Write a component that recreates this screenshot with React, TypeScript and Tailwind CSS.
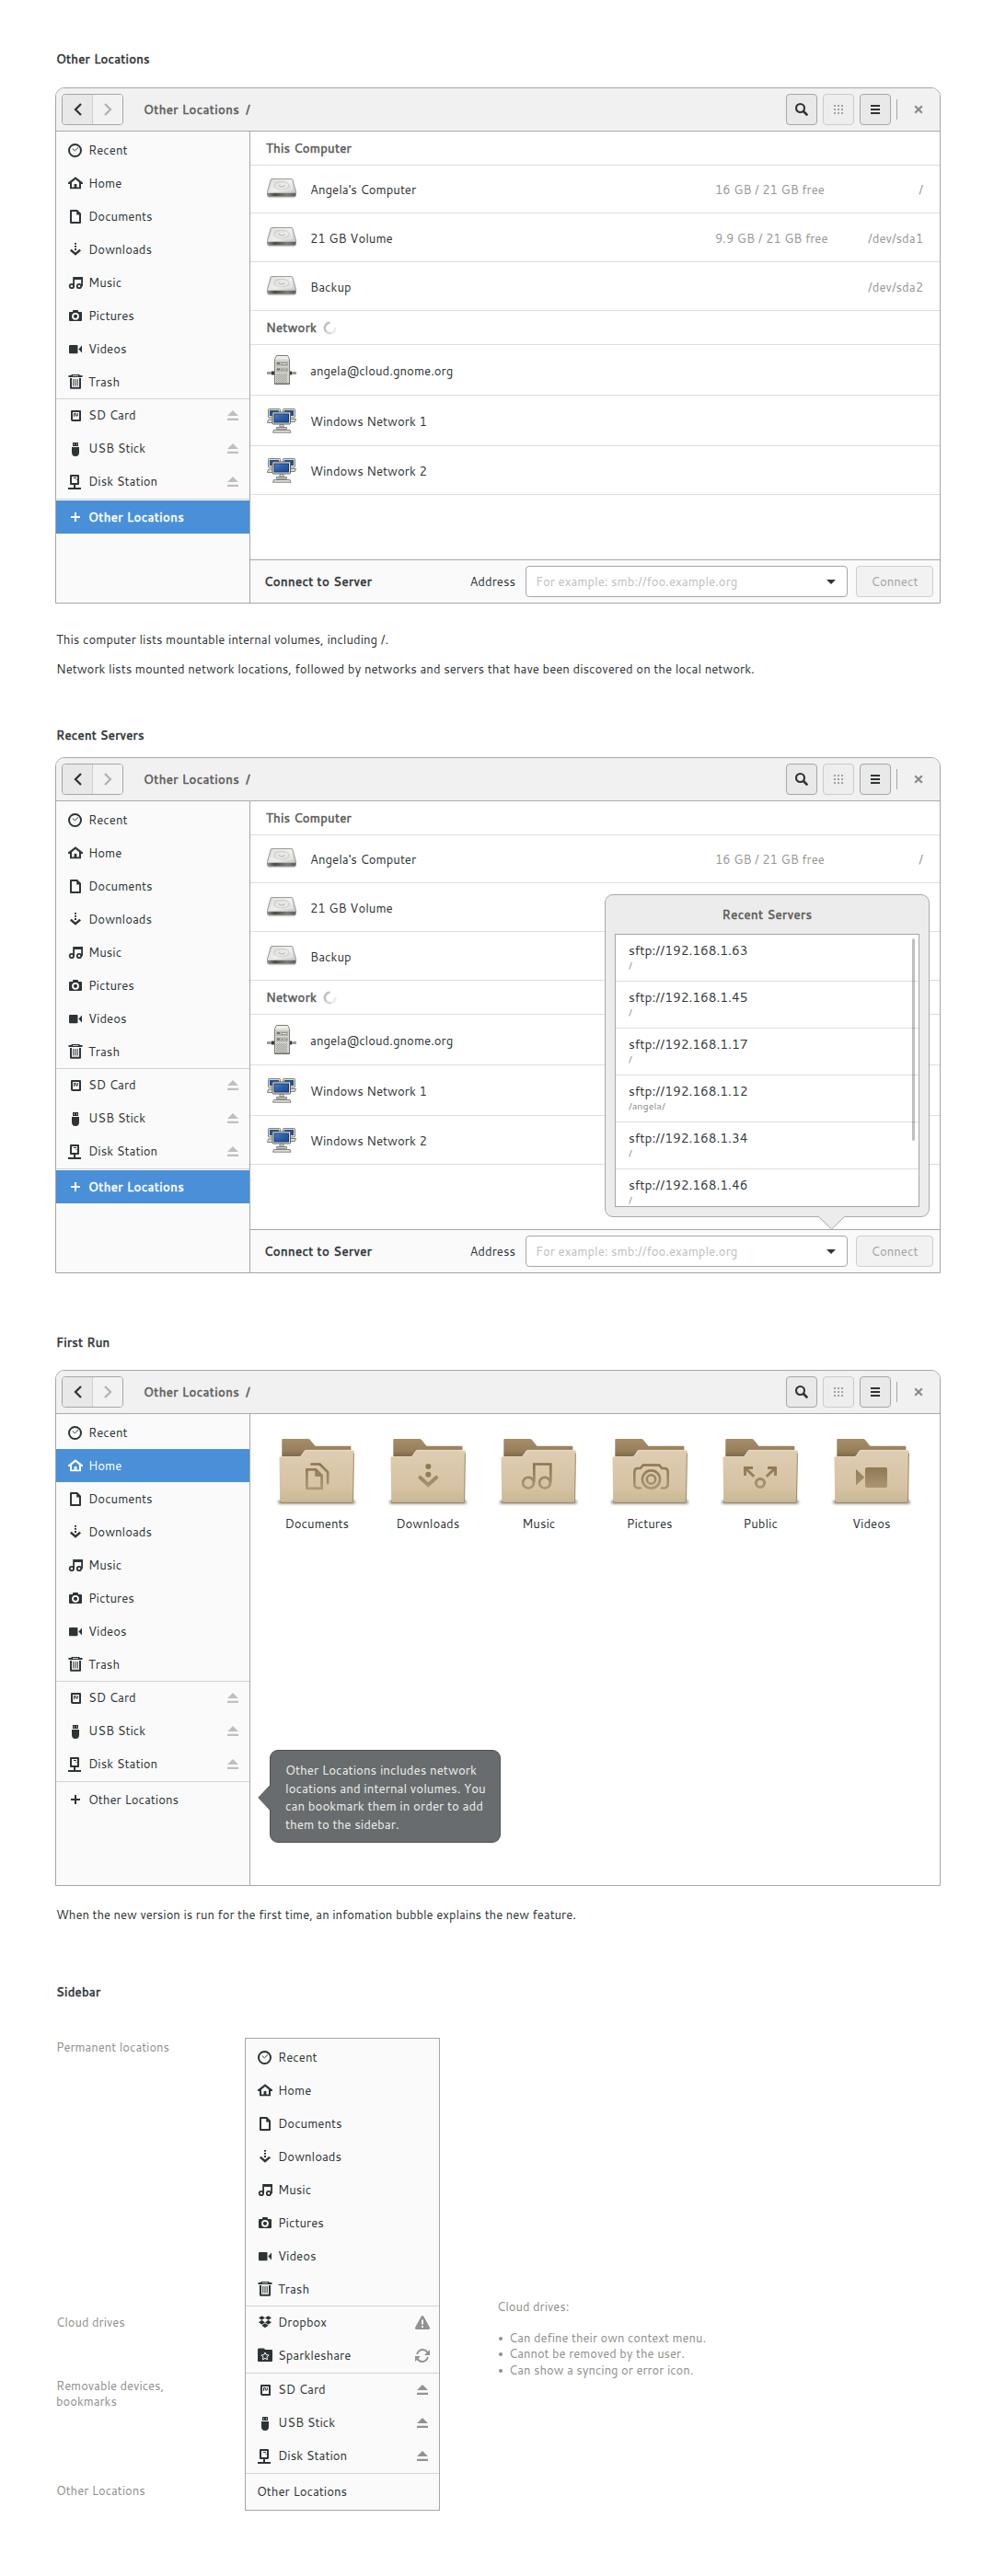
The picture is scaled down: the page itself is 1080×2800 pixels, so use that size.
import type { ReactNode } from "react";

/* ---------- symbolic icons (16px grid) ---------- */

function Sym({ children }: { children: ReactNode }) {
  return (
    <svg width="16" height="16" viewBox="0 0 16 16" fill="currentColor" className="shrink-0 overflow-visible">
      {children}
    </svg>
  );
}

const icons: Record<string, ReactNode> = {
  recent: (
    <Sym>
      <circle cx="7.5" cy="8.5" r="6.5" fill="none" stroke="currentColor" strokeWidth="2" />
      <path d="M4.8 6.6 7.4 8.8 11 5.4" fill="none" stroke="currentColor" strokeWidth="1" />
    </Sym>
  ),
  home: (
    <Sym>
      <path d="M0 7.6 8 1.2l8 6.4V9h-2v5.2H2V9H0zM4 7.2v5.2h2.6V9h2.8v3.4H12V7.2L8 4z" fillRule="evenodd" />
    </Sym>
  ),
  documents: (
    <Sym>
      <path d="M2 2q0-1 1-1h7l4 4v10q0 1-1 1H3q-1 0-1-1zM4 3v11h8V6.5H9.2V3z" fillRule="evenodd" />
    </Sym>
  ),
  downloads: (
    <Sym>
      <path d="M7 1h2v1.8H7zM7 4h2v1.8H7zM7 7h2v2H7z" />
      <path d="M2.8 8.6 8 13.2l5.2-4.6" fill="none" stroke="currentColor" strokeWidth="2.4" />
    </Sym>
  ),
  music: (
    <Sym>
      <circle cx="3.9" cy="12" r="2.2" fill="none" stroke="currentColor" strokeWidth="1.8" />
      <circle cx="12" cy="12" r="2.2" fill="none" stroke="currentColor" strokeWidth="1.8" />
      <path d="M5.2 12.2V2H16v10.2h-1.8V5H7v7.2z" />
    </Sym>
  ),
  pictures: (
    <Sym>
      <path d="M1 5q0-1 1-1h3V3q0-1 1-1h4q1 0 1 1v1h3q1 0 1 1v8q0 1-1 1H2q-1 0-1-1z" />
      <circle cx="8" cy="8.8" r="3" fill="none" stroke="#fff" strokeWidth="1.8" />
    </Sym>
  ),
  videos: (
    <Sym>
      <path d="M1 5q0-1 1-1h7.5q1 0 1 1v7.2q0 1-1 1H2q-1 0-1-1zM15 4.5v8L11.4 8.6z" />
    </Sym>
  ),
  trash: (
    <Sym>
      <path d="M3.5 0h9v1h3v2H.5V1h3zM5 1v.7h6V1z" fillRule="evenodd" />
      <path d="M3 4v10.8h10V4" fill="none" stroke="currentColor" strokeWidth="2" strokeLinejoin="round" />
      <path d="M5.3 5h1v7.6h-1zM7.5 5h1v7.6h-1zM9.7 5h1v7.6h-1z" />
    </Sym>
  ),
  sd: (
    <Sym>
      <path d="M3 4q0-1 1-1h9q1 0 1 1v10q0 1-1 1H5q-2 0-2-2zM5 5v8h7V5z" fillRule="evenodd" />
      <path d="M6.5 10V6.5h1.8V9h2V6" fill="none" stroke="currentColor" strokeWidth="1" />
    </Sym>
  ),
  usb: (
    <Sym>
      <path d="M5 2h6v4H5zM6 3.5v1h1v-1zM9 3.5v1h1v-1z" fillRule="evenodd" />
      <path d="M4 7h8v5.5Q12 17 8 17t-4-4.5z" />
    </Sym>
  ),
  disk: (
    <Sym>
      <path d="M2 2q0-1 1-1h8q1 0 1 1v9q0 1-1 1H3q-1 0-1-1zM4 3v7h6V3z" fillRule="evenodd" />
      <path d="M6 4h3v1H6zM8.5 6h1v1h-1zM6 12h2v3H6zM0 15h14v2H0z" />
    </Sym>
  ),
  plus: (
    <Sym>
      <path d="M7 3h2v4h4v2H9v4H7V9H3V7h4z" />
    </Sym>
  ),
  dropbox: (
    <Sym>
      <path d="M4.6 1.2 8 3.5 4.6 5.8 1 3.5zM11.4 1.2 15 3.5 11.4 5.8 8 3.5zM4.6 5.8 8 8.3 4.6 10.800 1 8.200zM11.4 5.800 15 8.200 11.400 10.800 8 8.300zM8 9.300l3.600 2.500L8 14.200l-3.600-2.400z" />
      <path d="M4.800 5.800 8 3.700l3.200 2.100L8 8z" fill="#fafafa" />
    </Sym>
  ),
  sparkle: (
    <Sym>
      <path d="M0 2Q0 .5 1 .5h5.500L8.500 2H15q1 0 1 1v11q0 1-1 1H1q-1 0-1-1z" />
      <path d="m8 5 1.200 2.600 2.900.4-2.100 1.900.5 2.900L8 11.400l-2.500 1.400.5-2.900L3.900 8l2.900-.4z" fill="none" stroke="#fff" strokeWidth="1" />
    </Sym>
  ),
};

function Eject() {
  return (
    <svg width="12" height="11" viewBox="0 0 12 11" fill="currentColor">
      <path d="M6 0 12 6H0zM0 8.700h12V11H0z" />
    </svg>
  );
}

function Warning() {
  return (
    <svg width="16" height="15" viewBox="0 0 16 15" fill="currentColor" className="-mr-[2px]">
      <path d="M6.600 1q1.400-2 2.800 0L16 13q.3 2-1.500 2h-13Q-.3 15 0 13zM7 4.500v5h2v-5zM7 11v2h2v-2z" fillRule="evenodd" />
    </svg>
  );
}

function Sync() {
  return (
    <svg width="16" height="15" viewBox="0 0 16 15" fill="none" stroke="currentColor" strokeWidth="2" className="-mr-[2px]">
      <path d="M2 6Q4 1 8 1t6 4M14 9q-2 5-6 5t-6-4" />
      <path d="M16 1v6h-6zM0 14V8h6z" fill="currentColor" stroke="none" />
    </svg>
  );
}

/* ---------- full colour icons ---------- */

function Drive() {
  return (
    <svg width="32" height="22" viewBox="0 0 32 23" preserveAspectRatio="none" className="shrink-0">
      <defs>
        <linearGradient id="drv-top" x1="0" y1="0" x2="1" y2="1">
          <stop offset="0" stopColor="#d4d4d2" />
          <stop offset=".5" stopColor="#ececea" />
          <stop offset="1" stopColor="#bdbdba" />
        </linearGradient>
        <linearGradient id="drv-front" x1="0" y1="0" x2="1" y2="0">
          <stop offset="0" stopColor="#8b8d89" />
          <stop offset=".25" stopColor="#4a4c48" />
          <stop offset=".7" stopColor="#7d807a" />
          <stop offset="1" stopColor="#5b5d59" />
        </linearGradient>
      </defs>
      <path d="M1 20h30l-1 2.200H2z" fill="#000" opacity=".16" />
      <path d="M5.200.5h21.600q.8 0 1 .8L31.500 15v4.300q0 1.200-1 1.200h-29q-1 0-1-1.200V15L4.200 1.300q.2-.8 1-.8z" fill="url(#drv-top)" stroke="#8c8e8a" strokeWidth=".9" />
      <path d="M1 16.500h30v2.700q0 .8-.8.8H1.800q-.8 0-.8-.8z" fill="url(#drv-front)" />
      <path d="M7 2.200h18l2.300 10.300H4.700z" fill="none" stroke="#fff" strokeWidth=".8" opacity=".7" />
      <ellipse cx="16" cy="8" rx="8" ry="4.500" fill="none" stroke="#c4c4c1" strokeWidth=".8" />
      <path d="M13 7.500q0 2 3.200 2t3.200-2" fill="none" stroke="#9c9e9a" strokeWidth=".8" />
    </svg>
  );
}

function Server() {
  return (
    <svg width="32" height="32" viewBox="0 0 32 32" className="shrink-0">
      <path d="M0 18.500h5v-1h3v4H5v-1H0v-.7h5v-.6H0zM32 18.500h-5v-1h-3v4h3v-1h5v-.7h-5v-.6h5z" fill="#3c3e3b" />
      <path d="M8.500 4.500 10.500.5h12l2 4v27h-16z" fill="#d6d6d0" stroke="#7c7e78" />
      <path d="M9 4.500 10.800 1h11.400L24 4.500z" fill="#eeeeea" />
      <path d="M10 7h13v5H10zM10 13.500h13v5H10z" fill="#b4b6ae" />
      <path d="M11 8h3v2h-3zM16 8.500h6v2h-6zM11 14.500h3v2h-3zM16 15h6v2h-6z" fill="#6e706a" />
      <path d="M16.500 9h5v1h-5zM16.500 15.500h5v1h-5z" fill="#eeeeea" />
      {[20.5, 22.5, 24.5, 26.5, 28.5].map((y) => (
        <path key={y} d={`M11 ${y}h12M10 ${y + 1}h12`} stroke="#8f918b" strokeWidth=".8" strokeDasharray="1 1" />
      ))}
      <path d="M8.500 31h16" stroke="#5a5c57" />
    </svg>
  );
}

function NetworkPcs() {
  return (
    <svg width="32" height="27" viewBox="0 0 32 27" className="shrink-0">
      <defs>
        <linearGradient id="scr" x1="0" y1="0" x2="1" y2="1">
          <stop offset="0" stopColor="#5080c4" />
          <stop offset=".5" stopColor="#2c5ea8" />
          <stop offset="1" stopColor="#1e4a90" />
        </linearGradient>
      </defs>
      <g fill="#dcdcd6" stroke="#74766f" strokeWidth=".9">
        <rect x="1.500" y=".5" width="13" height="9.500" rx=".8" />
        <rect x="17.500" y=".5" width="13" height="9.500" rx=".8" />
        <path d="M1.500 12h6v3.500h-7zM25 11.500h6.500l-1 3H25z" />
      </g>
      <path d="M3 2h10v6H3zM19 2h10v6H19z" fill="#1f4f96" />
      <rect x="6" y="4" width="19.500" height="13" rx="1" fill="#e6e6e0" stroke="#5d5f59" />
      <rect x="8" y="6" width="15.500" height="9" fill="url(#scr)" stroke="#16386f" />
      <g fill="#e2e2dc" stroke="#74766f" strokeWidth=".9">
        <path d="M14 17.500h4v2.500h-4z" />
        <path d="M10.500 20.500h11v1.800h-11z" />
        <path d="M7.500 23.500h17.500l1 2.700H6.500z" />
      </g>
    </svg>
  );
}

function Spinner() {
  return (
    <svg width="15" height="15" viewBox="0 0 15 15" fill="none" strokeWidth="2.600">
      <path d="M7.500 1.800A5.700 5.700 0 0 0 3.500 11.500" stroke="#c2c2c2" />
      <path d="M3.500 11.500A5.700 5.700 0 0 0 9 13" stroke="#d8d8d8" />
      <path d="M9 13A5.700 5.700 0 0 0 13.200 7" stroke="#ececec" />
    </svg>
  );
}

const emblems: Record<string, ReactNode> = {
  Documents: (
    <g fill="none" stroke="url(#emb)" strokeWidth="2.700">
      <path d="M30.400 33.300h9.600l6.600 6.600v14H30.400z" />
      <path d="M40 33.300v7h6.600z" fill="url(#emb)" strokeWidth="1.500" />
      <path d="M35.500 27.500h9l8.600 8.600v12" strokeLinecap="round" />
    </g>
  ),
  Downloads: (
    <g>
      <circle cx="41.300" cy="30" r="3" fill="#8f7852" />
      <circle cx="41.300" cy="38.800" r="3" fill="#937c57" />
      <path d="m32.500 42 8.800 8 8.800-8" fill="none" stroke="url(#emb)" strokeWidth="4" strokeLinecap="round" />
    </g>
  ),
  Music: (
    <g fill="none" stroke="url(#emb)" strokeWidth="2.700">
      <circle cx="30" cy="47.700" r="5.900" />
      <circle cx="48" cy="47.700" r="5.900" />
      <path d="M36.300 47V27.500h18V47" />
    </g>
  ),
  Pictures: (
    <g fill="none" stroke="url(#emb)" strokeWidth="2.600" strokeLinecap="round">
      <circle cx="42.500" cy="44" r="9.600" />
      <circle cx="42.500" cy="44" r="4.700" />
      <path d="M31 53.500h-2q-4.700 0-4.700-4.500V36q0-4 4-4h2.500l3-3.500h17.400l3 3.500h2.500q4 0 4 4v13q0 4.500-4.700 4.500h-2" />
    </g>
  ),
  Public: (
    <g fill="none" stroke="url(#emb)" strokeWidth="3">
      <circle cx="41" cy="48" r="4.600" />
      <path d="M34.200 40.800 25 32M33 31.500H24.500V40M47.800 40.800 57 32M49 31.500h8.500V40" />
    </g>
  ),
  Videos: (
    <g fill="url(#emb)">
      <rect x="34" y="31" width="24" height="22" rx="2" />
      <path d="m24 33 9.300 8.800L24 50.500z" />
    </g>
  ),
};

function Folder({ name }: { name: string }) {
  return (
    <svg width="82" height="74" viewBox="0 0 82 74" className="overflow-visible">
      <defs>
        <linearGradient id="fold-front" x1="0" y1="0" x2="0" y2="1">
          <stop offset="0" stopColor="#dfcdb3" />
          <stop offset=".7" stopColor="#d6c3a4" />
          <stop offset="1" stopColor="#c9b693" />
        </linearGradient>
        <linearGradient id="fold-back" x1="0" y1="0" x2="0" y2="22" gradientUnits="userSpaceOnUse">
          <stop offset="0" stopColor="#a58d68" />
          <stop offset=".6" stopColor="#977f5b" />
          <stop offset="1" stopColor="#735d3c" />
        </linearGradient>
        <linearGradient id="emb" x1="0" y1="26" x2="0" y2="56" gradientUnits="userSpaceOnUse">
          <stop offset="0" stopColor="#8a734c" />
          <stop offset="1" stopColor="#ad9977" />
        </linearGradient>
        <filter id="soft" x="-20%" y="-200%" width="140%" height="500%">
          <feGaussianBlur stdDeviation="1.500" />
        </filter>
      </defs>
      <rect x="-1" y="67" width="84" height="3.500" rx="1.700" fill="#000" opacity=".5" filter="url(#soft)" />
      <path d="M3.300 1q0-1 1-1h27.500q1.300 0 2 .8L39 7.200q.4.500 1.200.5h37q1.200 0 1.200 1V24H3.300z" fill="url(#fold-back)" />
      <path d="M.5 20.500q0-1.300 1.300-1.300h19.500q2.200 0 3-1.200l3-4.600q.9-1.400 2.700-1.400h50q1.700 0 1.700 1.500L80.800 68q0 1.800-1.600 1.800H2.800Q1.200 69.800 1.200 68z" fill="url(#fold-front)" />
      <path d="M.9 20.500q0-1 1-1h19.700q2.200 0 3-1.200l3-4.600q.9-1.300 2.400-1.300h50.200q1.100 0 1.100 1.300" fill="none" stroke="#f0e5d2" strokeWidth=".8" />
      <path d="M1.400 67.500q0 1.900 1.400 1.900h76.400q1.300 0 1.400-1.900l.8-52" fill="none" stroke="#8e7954" strokeWidth=".8" />
      {emblems[name]}
    </svg>
  );
}

/* ---------- window pieces ---------- */

const permanent: [string, string][] = [
  ["recent", "Recent"],
  ["home", "Home"],
  ["documents", "Documents"],
  ["downloads", "Downloads"],
  ["music", "Music"],
  ["pictures", "Pictures"],
  ["videos", "Videos"],
  ["trash", "Trash"],
];

const removable: [string, string][] = [
  ["sd", "SD Card"],
  ["usb", "USB Stick"],
  ["disk", "Disk Station"],
];

function Bold({ children, wide = false }: { children: ReactNode; wide?: boolean }) {
  return <span className={"[-webkit-text-stroke:0.55px_currentColor] " + (wide ? "tracking-[0.4px]" : "tracking-[0.25px]")}>{children}</span>;
}

function Item({ icon, label, active = false, bold = false, action }: { icon: string; label: string; active?: boolean; bold?: boolean; action?: ReactNode }) {
  return (
    <li className={"flex h-9 items-center pr-[12px] pl-[13px] " + (active ? "bg-[#4a90d9] text-white" : "")}>
      {icons[icon]}
      <span className="ml-[6px] flex-1">{bold ? <Bold wide>{label}</Bold> : label}</span>
      {action}
    </li>
  );
}

function HeaderBar() {
  return (
    <header className="flex h-[47px] items-center rounded-t-[9px] border-b border-[#a9aaa8] bg-[#f1f1f1] px-[6px]">
      <div className="flex h-[34px] w-[67px] overflow-hidden rounded-[4px] border border-[#a6a6a6]">
        <div className="flex w-[33px] items-center justify-center border-r border-[#cfcfcf] bg-[#e8e8e8] text-[#2e3436]">
          <svg width="9" height="14" viewBox="0 0 9 14" fill="none" stroke="currentColor" strokeWidth="2.300">
            <path d="M8 1 2 7l6 6" />
          </svg>
        </div>
        <div className="flex flex-1 items-center justify-center bg-[#f2f2f2] text-[#b2b2b2]">
          <svg width="9" height="14" viewBox="0 0 9 14" fill="none" stroke="currentColor" strokeWidth="2.300">
            <path d="m1 1 6 6-6 6" />
          </svg>
        </div>
      </div>
      <h2 className="ml-[22px] flex flex-1 gap-[7px] text-[#5c5d5b]">
        <Bold wide>Other Locations</Bold>
        <Bold>/</Bold>
      </h2>
      <div className="flex items-center gap-[6px]">
        <button className="flex h-[34px] w-[34px] items-center justify-center rounded-[4px] border border-[#a6a6a6] bg-[#e9e9e9] text-[#2e3436]">
          <svg width="16" height="16" viewBox="0 0 16 16" fill="none" stroke="currentColor">
            <circle cx="6.500" cy="6.500" r="4.500" strokeWidth="2.100" />
            <path d="m10 10 4.300 4.300" strokeWidth="2.600" />
          </svg>
        </button>
        <button className="flex h-[34px] w-[34px] items-center justify-center rounded-[4px] border border-[#cbcbcb] bg-[#eeeeee]">
          <svg width="10" height="10" viewBox="0 0 10 10" fill="#a0a1a0">
            <path d="M0 0h2v2H0zM4 0h2v2H4zM8 0h2v2H8zM0 4h2v2H0zM4 4h2v2H4zM8 4h2v2H8zM0 8h2v2H0zM4 8h2v2H4zM8 8h2v2H8z" />
          </svg>
        </button>
        <button className="flex h-[34px] w-[34px] items-center justify-center rounded-[4px] border border-[#a6a6a6] bg-[#e9e9e9]">
          <svg width="10" height="10" viewBox="0 0 10 10" fill="#2e3436">
            <path d="M0 0h10v2H0zM0 4h10v2H0zM0 8h10v2H0z" />
          </svg>
        </button>
        <div className="h-[22px] w-px bg-[#a6a6a6]" />
        <svg width="10" height="10" viewBox="0 0 10 10" stroke="#8a8c88" strokeWidth="2.200" className="mr-[12px] ml-[12px]">
          <path d="m1.200 1.200 7.600 7.600M8.800 1.200 1.200 8.800" />
        </svg>
      </div>
    </header>
  );
}

function Sidebar({ selected }: { selected: "home" | "other" }) {
  return (
    <aside className="w-[211px] shrink-0 border-r border-[#a6a6a6] bg-[#fafafa] pt-[2px]">
      <ul>
        {permanent.map(([icon, label]) => (
          <Item key={icon} icon={icon} label={label} active={selected === "home" && icon === "home"} />
        ))}
      </ul>
      <div className="-mb-px h-px bg-[#d3d4d0]" />
      <ul>
        {removable.map(([icon, label]) => (
          <Item key={icon} icon={icon} label={label} action={<span className="text-[#bfbfbf]"><Eject /></span>} />
        ))}
      </ul>
      <div className="mt-px mb-px h-px bg-[#d3d4d0]" />
      <ul>
        <Item icon="plus" label="Other Locations" active={selected === "other"} bold={selected === "other"} />
      </ul>
    </aside>
  );
}

function Frame({ selected, children }: { selected: "home" | "other"; children: ReactNode }) {
  return (
    <section className="ml-[60px] h-[561px] w-[962px] rounded-t-[10px] border border-[#a6a6a6] bg-white">
      <HeaderBar />
      <div className="flex h-[512px]">
        <Sidebar selected={selected} />
        <div className="relative flex flex-1 flex-col">{children}</div>
      </div>
    </section>
  );
}

function Row({ className, icon, name, free, path }: { className: string; icon: ReactNode; name: string; free?: string; path?: string }) {
  return (
    <div className={"flex shrink-0 items-center border-b border-[#dededb] pr-[18px] pl-[18px] " + className}>
      {icon}
      <span className="ml-[15px] flex-1 pt-[2px]">{name}</span>
      {path && (
        <>
          <span className="w-[140px] pt-[2px] text-[13.1px] text-[#959693]">{free}</span>
          <span className="w-[86px] pt-[2px] text-right text-[#959693]">{path}</span>
        </>
      )}
    </div>
  );
}

function LocationsView() {
  return (
    <>
      <div className="flex h-[37px] shrink-0 items-center border-b border-[#dededb] pl-[17px] text-[#5c5d5b]">
        <Bold>This Computer</Bold>
      </div>
      <Row className="h-[52px] pb-[2px]" icon={<Drive />} name="Angela's Computer" free="16 GB / 21 GB free" path="/" />
      <Row className="h-[53px]" icon={<Drive />} name="21 GB Volume" free="9.9 GB / 21 GB free" path="/dev/sda1" />
      <Row className="h-[53px]" icon={<Drive />} name="Backup" path="/dev/sda2" />
      <div className="flex h-[37px] shrink-0 items-center gap-[7px] border-b border-[#dededb] pl-[17px] text-[#5c5d5b]">
        <Bold>Network</Bold>
        <Spinner />
      </div>
      <Row className="h-[55px]" icon={<Server />} name="angela@cloud.gnome.org" />
      <Row className="h-[55px]" icon={<NetworkPcs />} name="Windows Network 1" />
      <Row className="h-[53px]" icon={<NetworkPcs />} name="Windows Network 2" />
      <div className="mt-auto flex h-[47px] shrink-0 items-center border-t border-[#a6a6a6] bg-[#fafafa] pr-[7px] pl-[15px]">
        <span className="flex-1">
          <Bold wide>Connect to Server</Bold>
        </span>
        <span className="mr-[11px]">Address</span>
        <div className="flex h-[34px] w-[350px] items-center justify-between rounded-[4px] border border-[#a6a6a6] bg-white pr-[12px] pl-[10px]">
          <span className="text-[#bebfbd]">For example: smb://foo.example.org</span>
          <svg width="10" height="5" viewBox="0 0 10 5" fill="#2e3436">
            <path d="M0 0h10L5 5z" />
          </svg>
        </div>
        <button className="ml-[9px] h-[34px] w-[84px] rounded-[4px] border border-[#cfcfcf] bg-[#f2f2f2] text-[#a2a3a1]">Connect</button>
      </div>
    </>
  );
}

const servers: [string, string][] = [
  ["sftp://192.168.1.63", "/"],
  ["sftp://192.168.1.45", "/"],
  ["sftp://192.168.1.17", "/"],
  ["sftp://192.168.1.12", "/angela/"],
  ["sftp://192.168.1.34", "/"],
  ["sftp://192.168.1.46", "/"],
];

function RecentServers() {
  return (
    <div className="absolute top-[101px] left-[385px] h-[351px] w-[353px] rounded-[9px] border border-[#a9aaa8] bg-[#ececec] px-[10px]">
      <h3 className="flex h-[42px] items-center justify-center text-[#5c5d5b]">
        <Bold wide>Recent Servers</Bold>
      </h3>
      <div className="relative h-[297px] overflow-hidden border border-[#a6a6a6] bg-white">
        {servers.map(([address, dir]) => (
          <div key={address} className="h-[51px] border-b border-[#dededb] pt-[8px] pl-[14px]">
            <div className="text-[13.8px] leading-[18px]">{address}</div>
            <div className="text-[10.7px] leading-[14px] text-[#8b8c89]">{dir}</div>
          </div>
        ))}
        <div className="absolute top-[4px] right-[4px] h-[220px] w-[3px] rounded-full bg-black/25" />
      </div>
      <svg width="29" height="15" viewBox="0 0 29 15" className="absolute top-[349px] left-[231px]">
        <path d="M0 0h29v1L14.500 14 0 1z" fill="#ececec" />
        <path d="M0 .5h.5L14.500 14 28.500.5h.5" fill="none" stroke="#a9aaa8" />
      </svg>
    </div>
  );
}

function FirstRunView() {
  return (
    <>
      <div className="flex pt-[27px] pl-[12px]">
        {["Documents", "Downloads", "Music", "Pictures", "Public", "Videos"].map((name) => (
          <div key={name} className="flex w-[120.5px] flex-col items-center">
            <Folder name={name} />
            <span className="mt-[8px]">{name}</span>
          </div>
        ))}
      </div>
      <div className="absolute top-[365px] left-[21px] w-[251px] rounded-[9px] border border-[#505356] bg-[#686c6e] pt-[11px] pb-[9px] pl-[16px] text-[13.35px] whitespace-nowrap text-[#eeeeec]">
        {["Other Locations includes network", "locations and internal volumes. You", "can bookmark them in order to add", "them to the sidebar."].map((line) => (
          <div key={line} className="leading-[19.7px]">{line}</div>
        ))}
        <svg width="15" height="30" viewBox="0 0 15 30" className="absolute top-[36px] -left-[14px]">
          <path d="M15 0 1 15l14 15z" fill="#686c6e" />
          <path d="M14 1 .8 15 14 29" fill="none" stroke="#505356" />
        </svg>
      </div>
    </>
  );
}

function Title({ className = "", children }: { className?: string; children: ReactNode }) {
  return (
    <h1 className={"ml-[61px] h-5 leading-5 " + className}>
      <Bold>{children}</Bold>
    </h1>
  );
}

function SidebarSpec() {
  return (
    <section className="mt-[40px] ml-[61px] flex text-[#8f908d]">
      <div className="w-[205px] text-[13px] leading-5">
        <p>Permanent locations</p>
        <p className="mt-[279px]">Cloud drives</p>
        <p className="mt-[51px] leading-[17px]">
          Removable devices,
          <br />
          bookmarks
        </p>
        <p className="mt-[78px]">Other Locations</p>
      </div>
      <div className="h-[514px] w-[212px] border border-[#a6a6a6] bg-[#fafafa] pt-[2px] text-[#2e3436]">
        <ul>
          {permanent.map(([icon, label]) => (
            <Item key={icon} icon={icon} label={label} />
          ))}
        </ul>
        <div className="-mb-px h-px bg-[#d3d4d0]" />
        <ul>
          <Item icon="dropbox" label="Dropbox" action={<span className="text-[#929292]"><Warning /></span>} />
          <Item icon="sparkle" label="Sparkleshare" action={<span className="text-[#929292]"><Sync /></span>} />
        </ul>
        <div className="mt-px -mb-px h-px bg-[#d3d4d0]" />
        <ul>
          {removable.map(([icon, label]) => (
            <Item key={icon} icon={icon} label={label} action={<span className="text-[#929292]"><Eject /></span>} />
          ))}
        </ul>
        <div className="mt-px h-px bg-[#d3d4d0]" />
        <div className="flex h-[37px] items-center pl-[12px]">Other Locations</div>
      </div>
      <div className="ml-[62px] pt-[282px] text-[13px] leading-[17.4px]">
        <p className="leading-5">Cloud drives:</p>
        <ul className="mt-[16px]">
          {["Can define their own context menu.", "Cannot be removed by the user.", "Can show a syncing or error icon."].map((line) => (
            <li key={line} className="flex items-center">
              <span className="mr-[7px] ml-[2px] h-[4px] w-[4px] rounded-full bg-current" />
              {line}
            </li>
          ))}
        </ul>
      </div>
    </section>
  );
}

export default function App() {
  return (
    <main className="h-[2800px] w-[1080px] overflow-hidden bg-white pt-[54px] font-[Cantarell,'Noto_Sans',sans-serif] text-[13.2px] leading-5 text-[#2e3436]">
      <Title>Other Locations</Title>
      <div className="mt-[21px]">
        <Frame selected="other">
          <LocationsView />
        </Frame>
      </div>
      <p className="mt-[29px] ml-[61px]">This computer lists mountable internal volumes, including /.</p>
      <p className="mt-[12px] ml-[61px]">Network lists mounted network locations, followed by networks and servers that have been discovered on the local network.</p>

      <Title className="mt-[52px]">Recent Servers</Title>
      <div className="mt-[14px]">
        <Frame selected="other">
          <LocationsView />
          <RecentServers />
        </Frame>
      </div>

      <Title className="mt-[65px]">First Run</Title>
      <div className="mt-[20px]">
        <Frame selected="home">
          <FirstRunView />
        </Frame>
      </div>
      <p className="mt-[21px] ml-[61px] text-[13.06px]">When the new version is run for the first time, an infomation bubble explains the new feature.</p>

      <Title className="mt-[64px]">Sidebar</Title>
      <SidebarSpec />
    </main>
  );
}
